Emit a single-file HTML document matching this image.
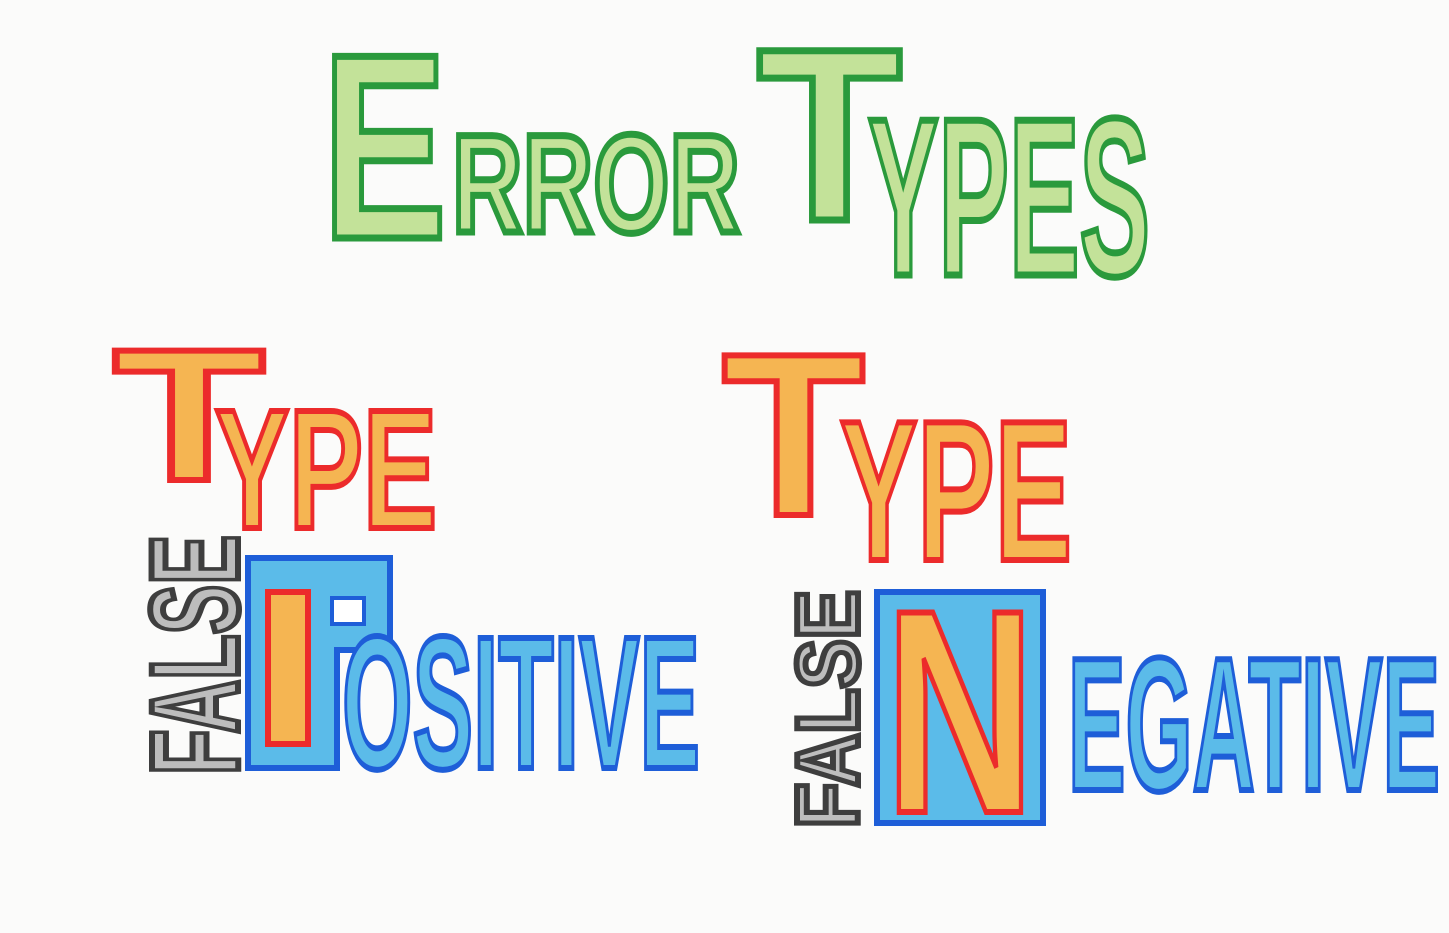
<!DOCTYPE html>
<html><head><meta charset="utf-8"><style>
html,body{margin:0;padding:0;background:#fbfbfa;}
svg{display:block}
text{font-family:"Liberation Sans",sans-serif;font-weight:bold;stroke-linejoin:miter}
.g{fill:#c3e299;stroke:#2a9a3c;stroke-width:7}
.o{fill:#f5b552;stroke:#ec2b2b;stroke-width:6}
.s{fill:#bdbdbd;stroke:#3e3e3e;stroke-width:6}
.b{fill:#5bbbe9;stroke:#1e5ed8;stroke-width:6}
</style></head><body>
<svg width="1449" height="933" viewBox="0 0 1449 933" xmlns="http://www.w3.org/2000/svg">
<rect width="1449" height="933" fill="#fbfbfa"/>
<text class="g" x="322" y="238" font-size="264" textLength="125" lengthAdjust="spacingAndGlyphs">E</text>
<text class="g" x="452" y="232" font-size="140" textLength="288" lengthAdjust="spacingAndGlyphs">RROR</text>
<text class="g" x="757" y="220" font-size="246" textLength="145" lengthAdjust="spacingAndGlyphs">T</text>
<text class="g" x="868" y="275" font-size="225" textLength="282" lengthAdjust="spacingAndGlyphs">YPES</text>
<text class="o" x="113" y="480" font-size="188" textLength="152" lengthAdjust="spacingAndGlyphs">T</text>
<text class="o" x="215" y="528" font-size="170" textLength="222" lengthAdjust="spacingAndGlyphs">YPE</text>
<text class="s" transform="translate(238,655) rotate(-90)" x="0" y="0" font-size="125" text-anchor="middle" textLength="240" lengthAdjust="spacingAndGlyphs">FALSE</text>
<polygon class="b" points="248,558 390,558 390,650 337,650 337,768 248,768"/>
<rect x="268" y="592" width="40" height="152" class="o"/>
<rect x="332" y="598" width="32" height="26" fill="#fff" stroke="#1e5ed8" stroke-width="4"/>
<text class="b" x="342" y="768" font-size="189" textLength="358" lengthAdjust="spacingAndGlyphs">OSITIVE</text>
<text class="o" x="722" y="515" font-size="232" textLength="143" lengthAdjust="spacingAndGlyphs">T</text>
<text class="o" x="840" y="560" font-size="200" textLength="232" lengthAdjust="spacingAndGlyphs">YPE</text>
<text class="s" transform="translate(858,709) rotate(-90)" x="0" y="0" font-size="88" text-anchor="middle" textLength="238" lengthAdjust="spacingAndGlyphs">FALSE</text>
<rect x="877" y="592" width="166" height="231" class="b"/>
<text class="o" x="885" y="812" font-size="290" textLength="150" lengthAdjust="spacingAndGlyphs">N</text>
<text class="b" x="1068" y="790" font-size="190" textLength="372" lengthAdjust="spacingAndGlyphs">EGATIVE</text>
</svg>
</body></html>
